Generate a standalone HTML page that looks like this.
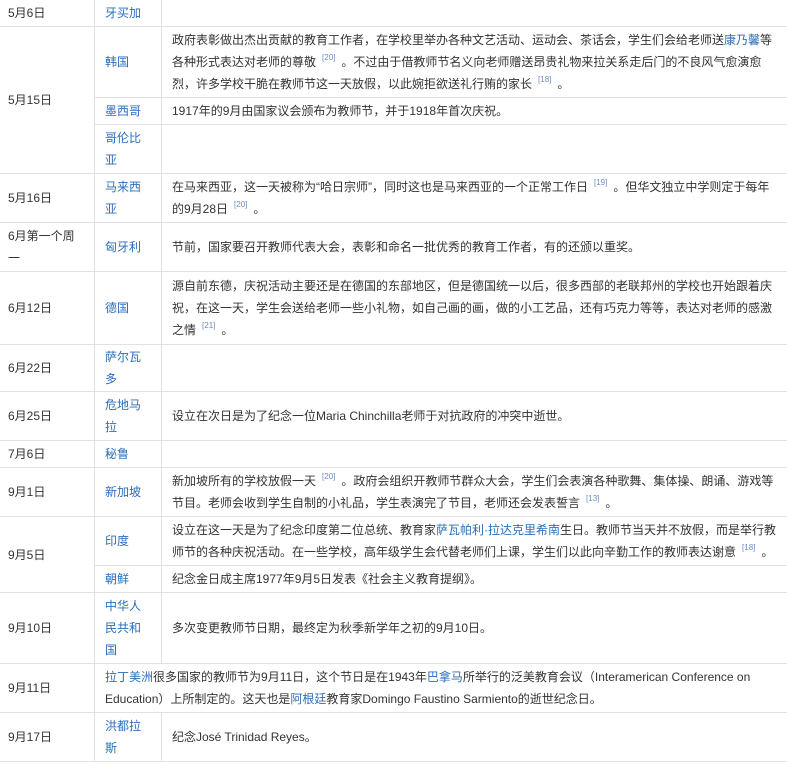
<!DOCTYPE html>
<html><head><meta charset="utf-8"><style>
body{margin:0;background:#fff;width:787px;height:757px;overflow:hidden}
table{border-collapse:collapse;table-layout:fixed;width:800px;font-family:"Liberation Sans","Noto Sans CJK SC",sans-serif;font-size:12px;color:#333;line-height:22px;margin-top:-1px;margin-left:-1px}
td{border:1px solid #e2e2e2;padding:0 0 0 10px;vertical-align:middle;white-space:nowrap;overflow:hidden}
td.d{padding-left:8px}
a{color:#2a6ebb;text-decoration:none}
sup{font-size:8px;color:#6b8cc0;vertical-align:6px;line-height:0;margin:0 6px 0 6px}
</style></head><body>
<table>
<col style="width:95px"><col style="width:67px"><col style="width:639px">
<tr style="height:27px"><td class="d">5月6日</td><td><a>牙买加</a></td><td></td></tr>
<tr style="height:71px"><td class="d" rowspan="3">5月15日</td><td><a>韩国</a></td><td>政府表彰做出杰出贡献的教育工作者，在学校里举办各种文艺活动、运动会、茶话会，学生们会给老师送<a>康乃馨</a>等<br>各种形式表达对老师的尊敬<sup>[20]</sup>。不过由于借教师节名义向老师赠送昂贵礼物来拉关系走后门的不良风气愈演愈<br>烈，许多学校干脆在教师节这一天放假，以此婉拒欲送礼行贿的家长<sup>[18]</sup>。</td></tr>
<tr style="height:27px"><td><a>墨西哥</a></td><td>1917年的9月由国家议会颁布为教师节，并于1918年首次庆祝。</td></tr>
<tr style="height:49px"><td><a>哥伦比<br>亚</a></td><td></td></tr>
<tr style="height:49px"><td class="d">5月16日</td><td><a>马来西<br>亚</a></td><td>在马来西亚，这一天被称为“哈日宗师”，同时这也是马来西亚的一个正常工作日<sup>[19]</sup>。但华文独立中学则定于每年<br>的9月28日<sup>[20]</sup>。</td></tr>
<tr style="height:49px"><td class="d">6月第一个周<br>一</td><td><a>匈牙利</a></td><td>节前，国家要召开教师代表大会，表彰和命名一批优秀的教育工作者，有的还颁以重奖。</td></tr>
<tr style="height:73px"><td class="d">6月12日</td><td><a>德国</a></td><td>源自前东德，庆祝活动主要还是在德国的东部地区，但是德国统一以后，很多西部的老联邦州的学校也开始跟着庆<br>祝，在这一天，学生会送给老师一些小礼物，如自己画的画，做的小工艺品，还有巧克力等等，表达对老师的感激<br>之情<sup>[21]</sup>。</td></tr>
<tr style="height:47px"><td class="d">6月22日</td><td><a>萨尔瓦<br>多</a></td><td></td></tr>
<tr style="height:49px"><td class="d">6月25日</td><td><a>危地马<br>拉</a></td><td>设立在次日是为了纪念一位Maria Chinchilla老师于对抗政府的冲突中逝世。</td></tr>
<tr style="height:27px"><td class="d">7月6日</td><td><a>秘鲁</a></td><td></td></tr>
<tr style="height:49px"><td class="d">9月1日</td><td><a>新加坡</a></td><td>新加坡所有的学校放假一天<sup>[20]</sup>。政府会组织开教师节群众大会，学生们会表演各种歌舞、集体操、朗诵、游戏等<br>节目。老师会收到学生自制的小礼品，学生表演完了节目，老师还会发表誓言<sup>[13]</sup>。</td></tr>
<tr style="height:49px"><td class="d" rowspan="2">9月5日</td><td><a>印度</a></td><td>设立在这一天是为了纪念印度第二位总统、教育家<a>萨瓦帕利·拉达克里希南</a>生日。教师节当天并不放假，而是举行教<br>师节的各种庆祝活动。在一些学校，高年级学生会代替老师们上课，学生们以此向辛勤工作的教师表达谢意<sup>[18]</sup>。</td></tr>
<tr style="height:27px"><td><a>朝鲜</a></td><td>纪念金日成主席1977年9月5日发表《社会主义教育提纲》。</td></tr>
<tr style="height:71px"><td class="d">9月10日</td><td><a>中华人<br>民共和<br>国</a></td><td>多次变更教师节日期，最终定为秋季新学年之初的9月10日。</td></tr>
<tr style="height:49px"><td class="d">9月11日</td><td colspan="2"><a>拉丁美洲</a>很多国家的教师节为9月11日，这个节日是在1943年<a>巴拿马</a>所举行的泛美教育会议（Interamerican Conference on<br>Education）上所制定的。这天也是<a>阿根廷</a>教育家Domingo Faustino Sarmiento的逝世纪念日。</td></tr>
<tr style="height:49px"><td class="d">9月17日</td><td><a>洪都拉<br>斯</a></td><td>纪念José Trinidad Reyes。</td></tr>
</table>
</body></html>
